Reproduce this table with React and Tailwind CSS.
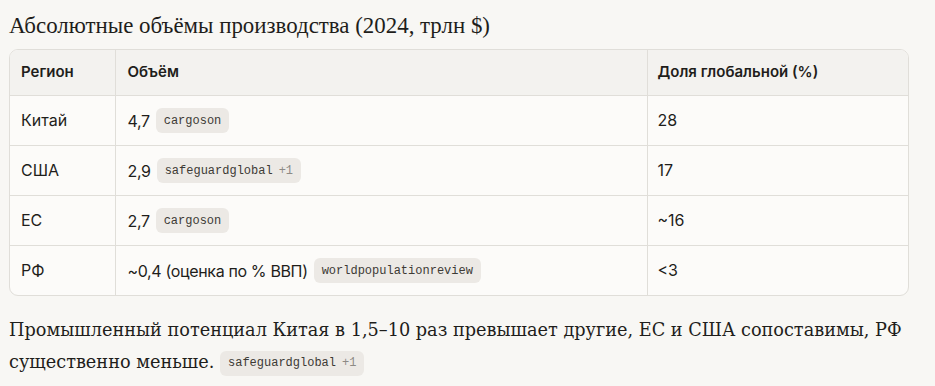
const rows = [
  { region: "Китай", value: "4,7", src: "cargoson", extra: null, share: "28" },
  { region: "США", value: "2,9", src: "safeguardglobal", extra: "+1", share: "17" },
  { region: "ЕС", value: "2,7", src: "cargoson", extra: null, share: "~16" },
  { region: "РФ", value: "~0,4 (оценка по % ВВП)", src: "worldpopulationreview", extra: null, share: "<3" },
];

function Source({ name, extra }) {
  return (
    <span className="inline-flex items-center gap-1.5 h-[25px] px-2 rounded-md bg-[#ece9e5] text-[12px] leading-none text-[#3d3a35] font-['Liberation_Mono',monospace] align-middle">
      <span>{name}</span>
      {extra && <span className="text-[#8d8a85]">{extra}</span>}
    </span>
  );
}

export default function App() {
  return (
    <div className="min-h-screen w-[935px] h-[386px] bg-[#f8f7f4] text-[#1f1e1b] px-[9px] pt-[10px]">
      <h2 className="text-[22.9px] leading-[32px] font-['Liberation_Serif',serif] mb-[7px]">
        Абсолютные объёмы производства (2024, трлн $)
      </h2>

      <div className="w-[900px] border border-[#e0ded9] rounded-[9px] overflow-hidden bg-[#fcfbf9] font-['Inter',sans-serif]">
        <table className="w-full border-collapse text-[16px]">
          <thead>
            <tr className="bg-[#f3f2ef] h-[45px] text-left">
              <th className="w-[105px] pl-[11px] font-semibold text-[15px] border-r border-b border-[#e0ded9]">Регион</th>
              <th className="w-[532px] pl-[12px] font-semibold text-[15px] border-r border-b border-[#e0ded9]">Объём</th>
              <th className="pl-[10px] font-semibold text-[15px] border-b border-[#e0ded9]">Доля глобальной (%)</th>
            </tr>
          </thead>
          <tbody>
            {rows.map((r, i) => (
              <tr key={r.region} className="h-[50px]">
                <td className={`pl-[11px] border-r border-[#e0ded9] ${i < rows.length - 1 ? "border-b" : ""}`}>{r.region}</td>
                <td className={`pl-[12px] border-r border-[#e0ded9] ${i < rows.length - 1 ? "border-b" : ""}`}>
                  <span className="align-middle mr-[6px] tracking-[-0.35px]">{r.value}</span>
                  <Source name={r.src} extra={r.extra} />
                </td>
                <td className={`pl-[10px] border-[#e0ded9] ${i < rows.length - 1 ? "border-b" : ""}`}>{r.share}</td>
              </tr>
            ))}
          </tbody>
        </table>
      </div>

      <p className="mt-[18px] text-[17.7px] leading-[32px] font-['DejaVu_Serif',serif] w-[910px]">
        Промышленный потенциал Китая в 1,5–10 раз превышает другие, ЕС и США сопоставимы, РФ существенно меньше.{" "}
        <Source name="safeguardglobal" extra="+1" />
      </p>
    </div>
  );
}
